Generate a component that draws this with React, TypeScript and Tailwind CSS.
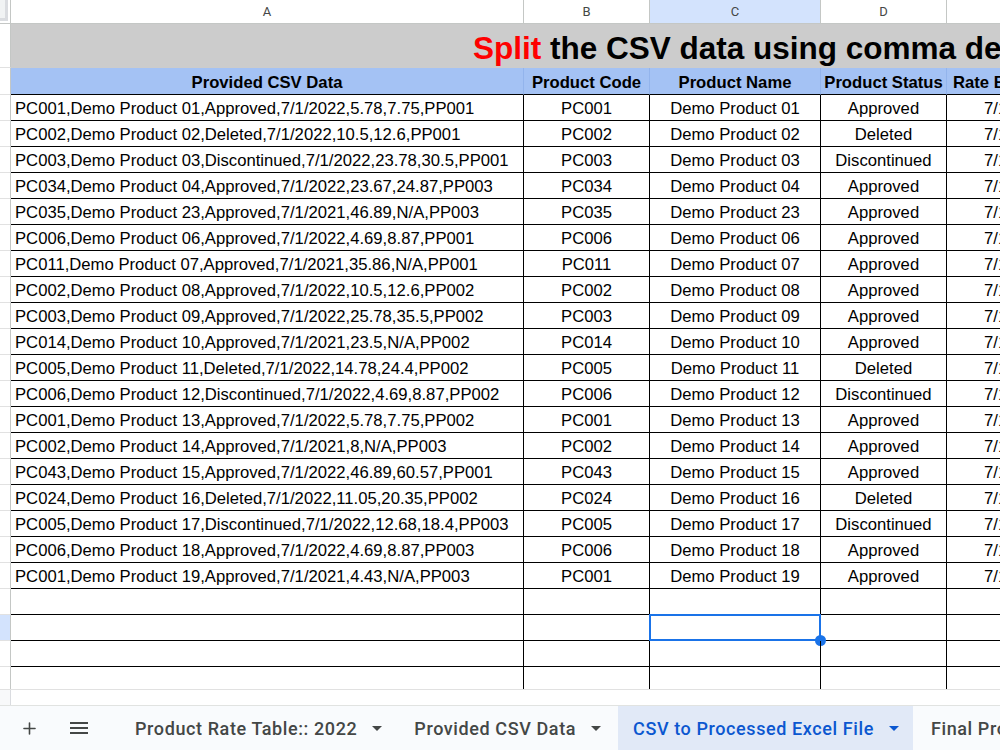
import { Plus } from "lucide-react";

const csvRows = [
    "PC001,Demo Product 01,Approved,7/1/2022,5.78,7.75,PP001",
    "PC002,Demo Product 02,Deleted,7/1/2022,10.5,12.6,PP001",
    "PC003,Demo Product 03,Discontinued,7/1/2022,23.78,30.5,PP001",
    "PC034,Demo Product 04,Approved,7/1/2022,23.67,24.87,PP003",
    "PC035,Demo Product 23,Approved,7/1/2021,46.89,N/A,PP003",
    "PC006,Demo Product 06,Approved,7/1/2022,4.69,8.87,PP001",
    "PC011,Demo Product 07,Approved,7/1/2021,35.86,N/A,PP001",
    "PC002,Demo Product 08,Approved,7/1/2022,10.5,12.6,PP002",
    "PC003,Demo Product 09,Approved,7/1/2022,25.78,35.5,PP002",
    "PC014,Demo Product 10,Approved,7/1/2021,23.5,N/A,PP002",
    "PC005,Demo Product 11,Deleted,7/1/2022,14.78,24.4,PP002",
    "PC006,Demo Product 12,Discontinued,7/1/2022,4.69,8.87,PP002",
    "PC001,Demo Product 13,Approved,7/1/2022,5.78,7.75,PP002",
    "PC002,Demo Product 14,Approved,7/1/2021,8,N/A,PP003",
    "PC043,Demo Product 15,Approved,7/1/2022,46.89,60.57,PP001",
    "PC024,Demo Product 16,Deleted,7/1/2022,11.05,20.35,PP002",
    "PC005,Demo Product 17,Discontinued,7/1/2022,12.68,18.4,PP003",
    "PC006,Demo Product 18,Approved,7/1/2022,4.69,8.87,PP003",
    "PC001,Demo Product 19,Approved,7/1/2021,4.43,N/A,PP003",
];

const tabs = ["Product Rate Table:: 2022", "Provided CSV Data", "CSV to Processed Excel File", "Final Product Rate Table"];

function Caret({ className }: { className: string }) {
    return (
        <svg width="10" height="5" viewBox="0 0 10 5" className={className}>
            <path d="M0 0 L10 0 L5 5 Z" fill="currentColor" />
        </svg>
    );
}

function RowHead({ selected = false }: { selected?: boolean }) {
    return (
        <div className={`w-[11px] shrink-0 border-r border-b border-r-[#c4c7c5] border-b-[#e1e1e1] ${selected ? "bg-[#d3e3fd]" : "bg-white"}`} />
    );
}

function DataRow({ cells, selected = false }: { cells: string[]; selected?: boolean }) {
    const [a, code, name, status, date] = cells;
    return (
        <div className="flex h-[26px] shrink-0">
            <RowHead selected={selected} />
            <div className="w-[513px] shrink-0 border-r border-b border-black pl-[4px] pt-[2px] flex items-center whitespace-nowrap overflow-hidden">{a}</div>
            <div className="w-[126px] shrink-0 border-r border-b border-black pt-[2px] flex items-center justify-center">{code}</div>
            <div className="relative w-[171px] shrink-0 border-r border-b border-black pt-[2px] flex items-center justify-center">
                {name}
                {selected && (
                    <>
                        <div className="absolute -left-px -top-px -right-px -bottom-px border-2 border-[#1a73e8]" />
                        <div className="absolute -right-[6px] -bottom-[6px] w-[11px] h-[11px] rounded-full bg-[#1a73e8]" />
                    </>
                )}
            </div>
            <div className="w-[126px] shrink-0 border-r border-b border-black pt-[2px] flex items-center justify-center">{status}</div>
            <div className="w-[140px] shrink-0 border-r border-b border-black pt-[2px] flex items-center justify-center">{date}</div>
            <div className="w-[120px] shrink-0 border-b border-black" />
        </div>
    );
}

export default function App() {
    const rows = csvRows.map((line) => [line, ...line.split(",")]);

    return (
        <div className="w-[1000px] h-[750px] overflow-hidden bg-white flex flex-col text-black font-['Liberation_Sans',Arial,sans-serif] text-[16.67px]">
            {/* sheet grid */}
            <div className="h-[689px] overflow-hidden flex flex-col shrink-0">
                {/* column letters */}
                <div className="flex h-[24px] shrink-0 text-[13px] text-[#444746] font-['Roboto',sans-serif]">
                    <div className="w-[11px] shrink-0 border-r border-b border-[#c4c7c5] bg-white">
                        <div className="w-[8px] h-[21px] bg-[#f1f3f4] border-r-[3px] border-b-[3px] border-[#dadce0]" />
                    </div>
                    <div className="w-[513px] shrink-0 border-r border-b border-[#c4c7c5] flex items-center justify-center">A</div>
                    <div className="w-[126px] shrink-0 border-r border-b border-[#c4c7c5] flex items-center justify-center">B</div>
                    <div className="w-[171px] shrink-0 border-r border-b border-[#c4c7c5] bg-[#d3e3fd] flex items-center justify-center">C</div>
                    <div className="w-[126px] shrink-0 border-r border-b border-[#c4c7c5] flex items-center justify-center">D</div>
                    <div className="w-[140px] shrink-0 border-r border-b border-[#c4c7c5] flex items-center justify-center">E</div>
                    <div className="w-[120px] shrink-0 border-b border-[#c4c7c5]" />
                </div>

                {/* title row */}
                <div className="flex h-[44px] shrink-0">
                    <RowHead />
                    <div className="flex-1 bg-[#cccccc] flex items-center pl-[462px] pt-[5px] whitespace-nowrap overflow-hidden font-bold text-[31.5px]">
                        <span className="text-[#ff0000]">Split</span>
                        <span>&nbsp;the CSV data using comma delimiter in Excel</span>
                    </div>
                </div>

                {/* header row */}
                <div className="flex h-[27px] shrink-0 font-bold">
                    <RowHead />
                    <div className="w-[513px] shrink-0 bg-[#a4c2f4] pt-[2px] border-r border-r-[#93b4ec] border-b border-b-black flex items-center justify-center">Provided CSV Data</div>
                    <div className="w-[126px] shrink-0 bg-[#a4c2f4] pt-[2px] border-r border-r-[#93b4ec] border-b border-b-black flex items-center justify-center whitespace-nowrap">Product Code</div>
                    <div className="w-[171px] shrink-0 bg-[#a4c2f4] pt-[2px] border-r border-r-[#93b4ec] border-b border-b-black flex items-center justify-center whitespace-nowrap">Product Name</div>
                    <div className="w-[126px] shrink-0 bg-[#a4c2f4] pt-[2px] border-r border-r-[#93b4ec] border-b border-b-black flex items-center justify-center whitespace-nowrap overflow-hidden">Product Status</div>
                    <div className="w-[140px] shrink-0 bg-[#a4c2f4] pt-[2px] border-r border-r-[#93b4ec] border-b border-b-black flex items-center pl-[6px] whitespace-nowrap overflow-hidden">Rate Effective Date</div>
                    <div className="w-[120px] shrink-0 bg-[#a4c2f4] border-b border-b-black" />
                </div>

                {rows.map((r, i) => (
                    <DataRow key={i} cells={r} />
                ))}
                <DataRow cells={["", "", "", "", ""]} />
                <DataRow cells={["", "", "", "", ""]} selected />
                <DataRow cells={["", "", "", "", ""]} />
                <DataRow cells={["", "", "", "", ""]} />
            </div>

            {/* scroll strip */}
            <div className="flex h-[16px] shrink-0 border-t border-[#e1e1e1]">
                <div className="w-[11px] shrink-0 bg-[#f8f9fa] border-r border-[#dadce0]" />
                <div className="flex-1 bg-white" />
            </div>

            {/* sheet tabs */}
            <div className="flex-1 flex items-stretch overflow-hidden bg-[#f9fbfd] border-t border-[#e1e3e1] font-['Roboto',sans-serif] font-medium text-[18px] tracking-[0.6px] text-[#444746]">
                <div className="w-[58px] shrink-0 flex items-center justify-center">
                    <Plus size={19} strokeWidth={2} className="text-[#444746] ml-[1px]" />
                </div>
                <div className="w-[42px] shrink-0 flex items-center justify-center">
                    <svg width="18" height="14" viewBox="0 0 18 14">
                        <path d="M0 2 H18 M0 7 H18 M0 12 H18" stroke="#444746" strokeWidth="2" />
                    </svg>
                </div>
                <div className="w-[20px] shrink-0" />
                {tabs.map((t, i) => {
                    const active = i === 2;
                    return (
                        <div
                            key={t}
                            className={`shrink-0 flex items-center gap-[15px] pl-[15px] pr-[14px] mr-[3px] whitespace-nowrap ${active ? "bg-[#e1e9f7] text-[#0b57d0]" : ""}`}
                        >
                            <span>{t}</span>
                            <Caret className={active ? "text-[#0b57d0]" : "text-[#444746]"} />
                        </div>
                    );
                })}
            </div>
        </div>
    );
}
